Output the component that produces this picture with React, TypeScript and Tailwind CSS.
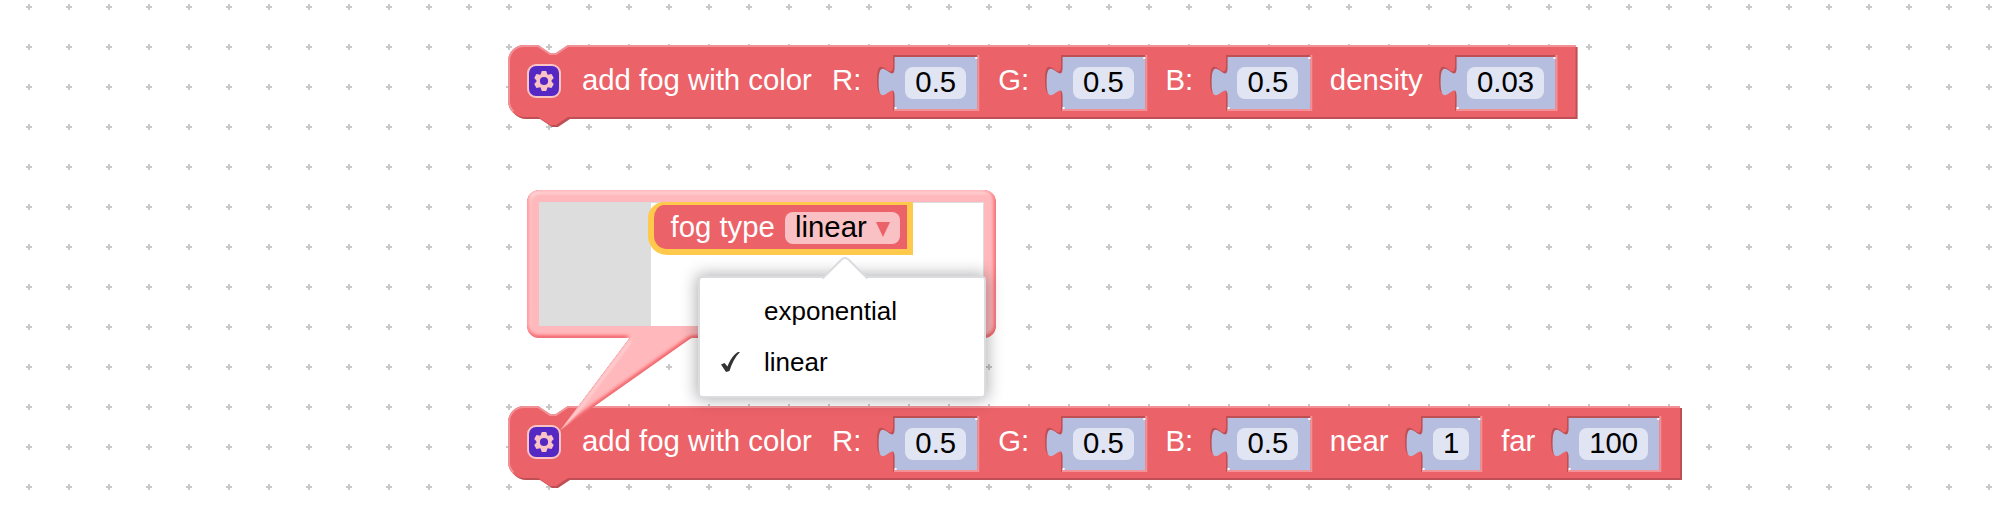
import React from "react";

const notchDown = "l12,8 h6 l12,-8";

function outline(w: number) {
  return `M0,16 A16,16 0 0 1 16,0 H30 ${notchDown} H${w} V72 H60 l-12,8 h-6 l-12,-8 H16 A16,16 0 0 1 0,56 Z`;
}

function BlockShape({ w }: { w: number }) {
  return (
    <svg className="absolute inset-0 overflow-visible" width={w} height={82}>
      <path d={outline(w)} fill="#be4f54" transform="translate(2,2)" />
      <path d={outline(w)} fill="#ec6269" />
      <path
        d={`M5.5,66.5 A15,15 0 0 1 1,56 V16 A15,15 0 0 1 16,1 H30 ${notchDown} H${w}`}
        fill="none"
        stroke="#f29196"
        strokeWidth={2}
      />
    </svg>
  );
}

const tab = "V10 c0,20 -16,-16 -16,15 s16,-5 16,15";

function Socket({ w, value }: { w: number; value: string }) {
  const hole = `M0,0 ${tab} V56 H${w - 2} V0 Z`;
  const child = `M0,0 ${tab} V52 H${w - 3.5} V0 Z`;
  return (
    <div className="relative mt-[10px] h-14 shrink-0" style={{ width: w }}>
      <svg className="absolute inset-0 overflow-visible" width={w} height={56}>
        <path d={hole} fill="#be4f54" />
        <path d={child} fill="#b5bedf" transform="translate(1.6,2)" />
        <path d={`M1,55 H${w - 1} V0`} fill="none" stroke="#f29196" strokeWidth={2} />
        <path d={`M${w - 4},2 h2 v2 h-2z M1.6,52 h2 v2 h-2z`} fill="#fff" />
      </svg>
      <div className="relative ml-[11.6px] mr-[13.4px] mt-3 flex h-8 justify-center rounded-lg bg-[#e1e4f2] leading-[30px] text-black">
        {value}
      </div>
    </div>
  );
}

function Gear() {
  return (
    <div className="mt-[19px] flex h-[34px] w-[34px] shrink-0 items-center justify-center rounded-[9px] border-2 border-[#fac4c6] bg-[#5528c4]">
      <svg width="20" height="20" viewBox="-10 -10 20 20">
        <circle r="5.8" fill="none" stroke="#fac4c6" strokeWidth="3.4" />
        {[0, 60, 120, 180, 240, 300].map((a) => (
          <path key={a} d="M-3.4,-6.4 L-2.2,-10 H2.2 L3.4,-6.4 Z" fill="#fac4c6" transform={`rotate(${a})`} />
        ))}
      </svg>
    </div>
  );
}

type Part = { label: string; labelWidth: number; value: string; socket: number; after: number };

function FogBlock({ width, parts }: { width: number; parts: Part[] }) {
  return (
    <div className="relative ml-[508.4px] flex h-[72px] items-start" style={{ width }}>
      <BlockShape w={width} />
      <div className="relative flex items-start pl-[18.6px]">
        <Gear />
        <span className="ml-[21px] mt-[19px] w-[250px] shrink-0 whitespace-nowrap leading-8 text-white">
          add fog with color
        </span>
        {parts.map((p) => (
          <div key={p.label} className="flex shrink-0 items-start">
            <span className="mt-[19px] shrink-0 whitespace-nowrap leading-8 text-white" style={{ width: p.labelWidth }}>
              {p.label}
            </span>
            <Socket w={p.socket} value={p.value} />
            <div className="shrink-0" style={{ width: p.after }} />
          </div>
        ))}
      </div>
    </div>
  );
}

const rgb: Part[] = [
  { label: "R:", labelWidth: 61.5, value: "0.5", socket: 86.3, after: 18.5 },
  { label: "G:", labelWidth: 62.8, value: "0.5", socket: 86.3, after: 18 },
  { label: "B:", labelWidth: 60.2, value: "0.5", socket: 86.3, after: 18 },
];

const densityParts: Part[] = [
  ...rgb,
  { label: "density", labelWidth: 125.3, value: "0.03", socket: 102.5, after: 18 },
];

const rangeParts: Part[] = [
  ...rgb,
  { label: "near", labelWidth: 91.5, value: "1", socket: 61.3, after: 18.5 },
  { label: "far", labelWidth: 66.2, value: "100", socket: 94.3, after: 18 },
];

function Grid() {
  return (
    <svg className="absolute inset-0" width="2000" height="509">
      <defs>
        <pattern id="grid" width="40" height="40" x="9" y="-13" patternUnits="userSpaceOnUse">
          <path d="M17,20 h6 M20,17 v6" stroke="#c8c8c8" strokeWidth="2" />
        </pattern>
      </defs>
      <rect width="2000" height="509" fill="url(#grid)" />
    </svg>
  );
}

function Bubble() {
  return (
    <div className="absolute left-[527px] top-[190px] h-[148px] w-[469px]">
      <svg className="absolute inset-0 overflow-visible" width="469" height="148">
        <defs>
          <filter id="emboss" x="-20%" y="-20%" width="140%" height="140%">
            <feGaussianBlur in="SourceAlpha" stdDeviation="1" result="blur" />
            <feSpecularLighting
              in="blur"
              surfaceScale="0.7"
              specularConstant="0.5"
              specularExponent="10"
              lightingColor="white"
              result="specOut"
            >
              <fePointLight x="-5000" y="-10000" z="20000" />
            </feSpecularLighting>
            <feComposite in="specOut" in2="SourceAlpha" operator="in" result="specOut" />
            <feComposite in="SourceGraphic" in2="specOut" operator="arithmetic" k1="0" k2="1" k3="1" k4="0" />
          </filter>
        </defs>
        <g transform="scale(2)" filter="url(#emboss)">
          <path d="M52,73 L16.5,120.3 L80,75.5 Q83,73 88,73 V68 H56 Z" fill="#ec6269" />
          <rect width="234.5" height="74" rx="6" fill="#ec6269" />
        </g>
      </svg>
      <div className="relative ml-3 mt-3 flex h-[123.5px] w-[445px] overflow-hidden border-r border-t border-[#ddd] bg-white">
        <div className="h-full w-28 bg-[#ddd]" />
      </div>
      <div className="absolute left-[121px] top-3 flex h-[53px] w-[265px] items-start rounded-bl-[19px] rounded-tl-[16px] border-x-[6px] border-b-[6px] border-t-[3px] border-[#ffc94b] bg-[#ec6269]">
        <span className="ml-[16.5px] mt-[6px] w-[114.5px] whitespace-nowrap leading-8 text-white">fog type</span>
        <div className="mt-[7px] flex h-8 w-[115px] shrink-0 items-center rounded-lg bg-[#f9c1c4] pl-[10px] text-black">
          <span className="-mt-[3px] w-[80.5px] leading-8">linear</span>
          <svg className="mt-0.5" width="14" height="15" viewBox="0 0 14 15">
            <path d="M0,0 H14 L7,15 Z" fill="#ec6269" />
          </svg>
        </div>
      </div>
    </div>
  );
}

function Menu() {
  return (
    <div className="absolute left-[698px] top-[276px] h-[122px] w-[288px] rounded-[4px] border-2 border-[#dadce0] bg-white text-[26px] text-black shadow-[0_0_16px_2px_rgba(0,0,0,0.3)]">
      <svg className="absolute left-[121px] top-[-22px]" width="48" height="24">
        <path d="M2,22.5 L20.5,3.5 Q24,0.5 27.5,3.5 L46,22.5 V24 H2 Z" fill="#fff" />
        <path d="M1.5,22.5 L20.5,3.5 Q24,0.5 27.5,3.5 L46.5,22.5" fill="none" stroke="#dadce0" strokeWidth="2" />
      </svg>
      <div className="relative flex h-[50px] items-center pl-[64px] pt-[16px] leading-8">exponential</div>
      <div className="relative flex h-[51px] items-center pt-[17px] leading-8">
        <svg className="ml-5 w-[22px]" height="22" viewBox="0 0 22 22">
          <path d="M1,13.5 L4.5,12 L7.5,15.5 C10,9 14,3 18,1 L20,1 C15,6 11.5,13 9.5,20 L6,21 Z" fill="#333" />
        </svg>
        <span className="ml-[22px]">linear</span>
      </div>
    </div>
  );
}

export default function App() {
  return (
    <div className="relative h-[509px] w-[2000px] overflow-hidden bg-white pt-[45px] font-['Liberation_Sans',Arial,sans-serif] text-[29.333px]">
      <Grid />
      <FogBlock width={1067.6} parts={densityParts} />
      <div className="h-[289px]" />
      <FogBlock width={1172} parts={rangeParts} />
      <Bubble />
      <Menu />
    </div>
  );
}
